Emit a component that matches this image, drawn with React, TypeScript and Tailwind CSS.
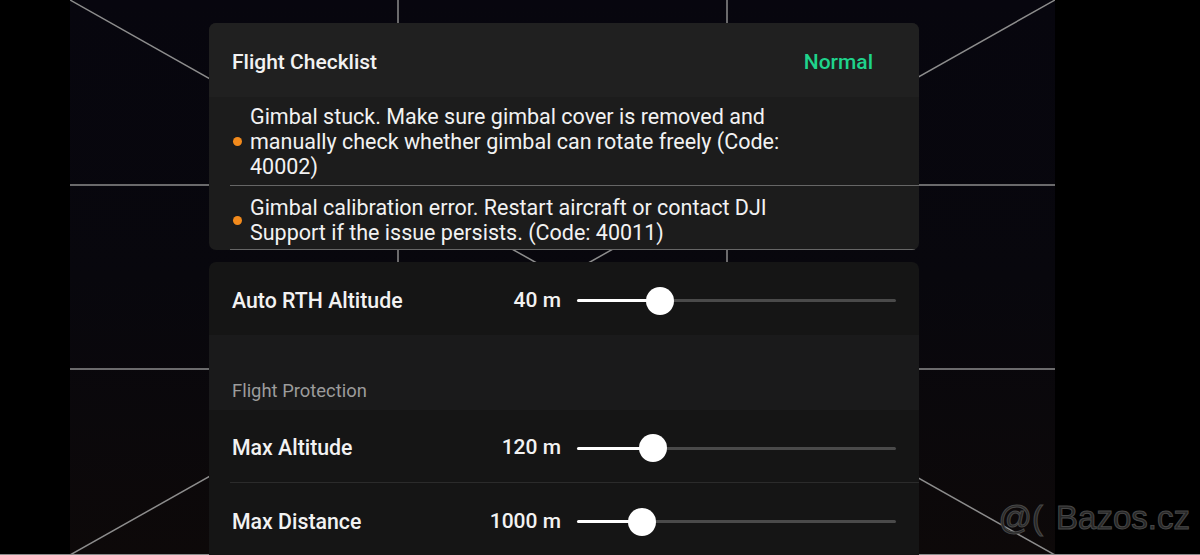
import React from "react";

const Slider = ({ pos }: { pos: number }) => (
  <div className="relative ml-[16px] h-[28px] w-[319px] flex items-center">
    <div className="h-[3px] w-full bg-[#4a4a4a] rounded-full" />
    <div className="absolute left-0 h-[3px] bg-white rounded-full" style={{ width: pos }} />
    <div
      className="absolute top-0 h-[28px] w-[28px] rounded-full bg-white"
      style={{ left: pos - 14 }}
    />
  </div>
);

const Row = ({ label, value, pos, h }: { label: string; value: string; pos: number; h: string }) => (
  <div className={`flex ${h} items-center bg-[#151515] pl-[23px] pr-[23px]`}>
    <span className="text-[21.3px] font-medium text-[#f2f2f2]">{label}</span>
    <span className="ml-auto text-[21px] font-medium text-[#f2f2f2]">{value}</span>
    <Slider pos={pos} />
  </div>
);

const Item = ({ children, pad }: { children: React.ReactNode; pad: string }) => (
  <div className={`ml-[21px] flex items-center border-b border-[#666666] ${pad}`}>
    <span className="ml-[3px] h-[9px] w-[9px] shrink-0 rounded-full bg-[#f28a1c]" />
    <p className="ml-[8px] w-[562px] text-[21.5px] leading-[25px] text-[#f2f2f2]">{children}</p>
  </div>
);

export default function App() {
  return (
    <div className="relative flex h-[555px] w-[1200px] flex-col overflow-hidden bg-black font-['Roboto',sans-serif]">
      <div className="flex h-[554px]">
        <div className="w-[70px] shrink-0" />
        <div className="relative w-[985px] shrink-0 bg-gradient-to-b from-[#07060e] via-[#08070d] to-[#0d0909]">
          <svg className="absolute inset-0" width="985" height="554" viewBox="0 0 985 554">
            <g stroke="#8d8d8d" strokeWidth="1.5" fill="none">
              <line x1="328" y1="0" x2="328" y2="554" />
              <line x1="657" y1="0" x2="657" y2="554" />
              <line x1="0" y1="185" x2="985" y2="185" />
              <line x1="0" y1="369" x2="985" y2="369" />
              <line x1="0" y1="0" x2="492.5" y2="277.5" />
              <line x1="985" y1="0" x2="492.5" y2="277.5" />
              <line x1="0" y1="555" x2="492.5" y2="277.5" />
              <line x1="985" y1="555" x2="492.5" y2="277.5" />
            </g>
          </svg>
          <div className="relative flex w-[849px] flex-col pl-[139px] pt-[23px]">
            <div className="overflow-hidden rounded-[7px] bg-[#1c1c1c]">
              <div className="flex h-[74px] items-center justify-between bg-[#202020] pl-[23px] pr-[46px] pt-[5px]">
                <span className="text-[21px] font-medium text-[#f2f2f2]">Flight Checklist</span>
                <span className="text-[21px] font-medium text-[#1fd38c]">Normal</span>
              </div>
              <Item pad="pt-[7px] pb-[6px]">
                Gimbal stuck. Make sure gimbal cover is removed and manually check whether gimbal can rotate freely (Code: 40002)
              </Item>
              <Item pad="pt-[9px] pb-[4px]">
                Gimbal calibration error. Restart aircraft or contact DJI Support if the issue persists. (Code: 40011)
              </Item>
            </div>
            <div className="mt-[12px] overflow-hidden rounded-t-[7px] bg-[#151515]">
              <div className="flex h-[73px] items-center pl-[23px] pr-[23px] pt-[4px]">
                <span className="text-[21.3px] font-medium text-[#f2f2f2]">Auto RTH Altitude</span>
                <span className="ml-auto text-[21px] font-medium text-[#f2f2f2]">40 m</span>
                <Slider pos={83} />
              </div>
              <div className="flex h-[75px] items-end bg-[#1a1a1b] pb-[8px] pl-[23px]">
                <span className="text-[18.4px] leading-[22px] text-[#9c9c9c]">Flight Protection</span>
              </div>
              <Row label="Max Altitude" value="120 m" pos={76} h="h-[72px] pt-[4px]" />
              <div className="ml-[21px] h-px bg-[#2b2b2b]" />
              <Row label="Max Distance" value="1000 m" pos={65} h="h-[72px] pt-[5px]" />
            </div>
          </div>
        </div>
        <div className="flex-1" />
      </div>
      <div className="h-px bg-[#8a8a8a]" />
      <div className="absolute right-[10px] bottom-[21px] flex items-baseline gap-[13px] font-['Liberation_Sans',sans-serif] text-[33px] leading-none text-[#262626] [-webkit-text-stroke:1px_#474747]">
        <span>@(</span>
        <span>Bazos.cz</span>
      </div>
    </div>
  );
}
